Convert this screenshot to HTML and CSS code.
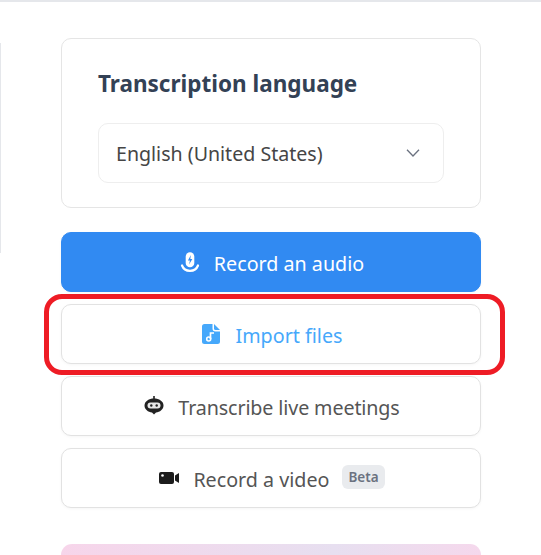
FILE: index.html
```html
<!DOCTYPE html>
<html lang="en">
<head>
<meta charset="utf-8">
<title>Transcription</title>
<link rel="stylesheet" href="styles.css">
</head>
<body>
<div class="topline"></div>
<div class="page">
  <div class="rail"></div>
  <main class="column">
    <section class="card">
      <h2 class="card-title">Transcription language</h2>
      <div class="select">
        <span>English (United States)</span>
        <svg class="chevron" viewBox="0 0 16 16" width="16" height="16"><path d="M2 4.700 8 11l6-6.300" fill="none" stroke="#6b7280" stroke-width="1.300"/></svg>
      </div>
    </section>
    <div class="actions">
      <button class="btn btn-primary">
        <svg class="ico" viewBox="0 0 20 20" width="20" height="20"><rect x="5.700" y="0.300" width="8.600" height="15" rx="4.300" fill="#fff"/><path d="M10.900 3 7.900 8.500h2l-.8 4L12.300 7h-2z" fill="#318af2"/><path d="M2 13.500c1.300 3.400 4.400 5.300 8 5.300s6.700-1.900 8-5.300" fill="none" stroke="#fff" stroke-width="2.200" stroke-linecap="round"/></svg>
        <span>Record an audio</span>
      </button>
      <button class="btn btn-accent">
        <svg class="ico ico-file" viewBox="0 0 18 20" width="18" height="20"><path d="M2.500 0H10.500v4.500a3 3 0 0 0 3 3H18v10a2.500 2.500 0 0 1-2.500 2.500h-13A2.500 2.500 0 0 1 0 17.500v-15A2.500 2.500 0 0 1 2.500 0z" fill="#46a8fb"/><path d="M12 0 18 6h-4.500a1.500 1.500 0 0 1-1.500-1.500z" fill="#46a8fb"/><circle cx="6.700" cy="15" r="2" fill="none" stroke="#fff" stroke-width="1.600"/><path d="M8.500 15V9h3.500" fill="none" stroke="#fff" stroke-width="1.700"/></svg>
        <span>Import files</span>
      </button>
      <button class="btn">
        <svg class="ico" viewBox="0 0 20 20" width="20" height="20"><rect x="9.200" y="0" width="1.600" height="3" fill="#222"/><path d="M10 2.500c5 0 9.500 2.700 9.500 7 0 4-3.600 6.600-7.500 6.900L10 18.500l-2-2.100c-3.900-.3-7.500-2.900-7.500-6.900 0-4.300 4.500-7 9.500-7z" fill="#222"/><rect x="3.500" y="6.500" width="13" height="6" rx="3" fill="#e8e8e8"/><circle cx="7.300" cy="9.500" r="1.200" fill="#222"/><circle cx="12.700" cy="9.500" r="1.200" fill="#222"/></svg>
        <span class="tight">Transcribe live meetings</span>
      </button>
      <button class="btn">
        <svg class="ico" viewBox="0 0 20 20" width="20" height="20"><rect x="0" y="4" width="15" height="12" rx="2" fill="#1c1c1c"/><circle cx="3.500" cy="7.500" r="1.300" fill="#fff"/><path d="M16 7.500 20 5v10l-4-2.500z" fill="#1c1c1c"/></svg>
        <span>Record a video</span>
        <span class="badge">Beta</span>
      </button>
    </div>
    <div class="promo"></div>
  </main>
</div>
<div class="highlight"></div>
</body>
</html>
```
FILE: styles.css
```css
html, body {
  margin: 0;
  height: 555px;
  overflow: hidden;
  background: #fff;
}
body {
  position: relative;
  font-family: "Noto Sans", "Open Sans", sans-serif;
  color: #374151;
}
.topline {
  height: 2px;
  background: #e5e7eb;
}
.page {
  display: flex;
}
.rail {
  width: 1px;
  height: 210px;
  margin-top: 41px;
  background: #e5e7eb;
}
.column {
  width: 420px;
  margin-left: 60px;
  padding-top: 36px;
}
.card {
  box-sizing: border-box;
  height: 170px;
  padding: 30px 36px 0;
  border: 1px solid #e5e5e5;
  border-radius: 10px;
}
.card-title {
  margin: 0;
  font-size: 22.5px;
  line-height: 30px;
  font-weight: 700;
  color: #334155;
}
.select {
  box-sizing: border-box;
  height: 60px;
  margin-top: 24px;
  padding: 0 22px 0 17px;
  display: flex;
  align-items: center;
  justify-content: space-between;
  border: 1px solid #eeeeee;
  border-radius: 10px;
  font-size: 19.6px;
  color: #454545;
}
.actions {
  margin-top: 24px;
  display: flex;
  flex-direction: column;
  gap: 12px;
}
.btn {
  box-sizing: border-box;
  height: 60px;
  width: 100%;
  display: flex;
  align-items: center;
  justify-content: center;
  gap: 14px;
  padding: 2px 0 0 2px;
  border: 1px solid #e2e2e2;
  border-radius: 10px;
  background: #fff;
  font: inherit;
  font-size: 19.7px;
  color: #555555;
  box-shadow: 0 1px 3px rgba(0, 0, 0, .04);
}
.btn-primary {
  background: #318af2;
  border-color: #318af2;
  color: #fff;
}
.btn-accent {
  gap: 16px;
  color: #46a8fb;
}
.tight {
  letter-spacing: -.12px;
}
.ico {
  flex: none;
  margin-top: -2px;
}
.badge {
  margin-left: -1px;
  padding: 0 6px;
  height: 24px;
  line-height: 24px;
  margin-top: -4px;
  border-radius: 6px;
  background: #e9ebee;
  color: #6b7280;
  font-size: 13.5px;
  font-weight: 600;
}
.promo {
  height: 11px;
  margin-top: 36px;
  border-radius: 12px 12px 0 0;
  background: linear-gradient(100deg, #f7d5ea 0%, #e7dff0 65%, #f5d8ec 100%);
}
.highlight {
  position: absolute;
  left: 44px;
  top: 294px;
  width: 461px;
  height: 81px;
  box-sizing: border-box;
  border: 5px solid #ee1c25;
  border-radius: 18px;
}
```
